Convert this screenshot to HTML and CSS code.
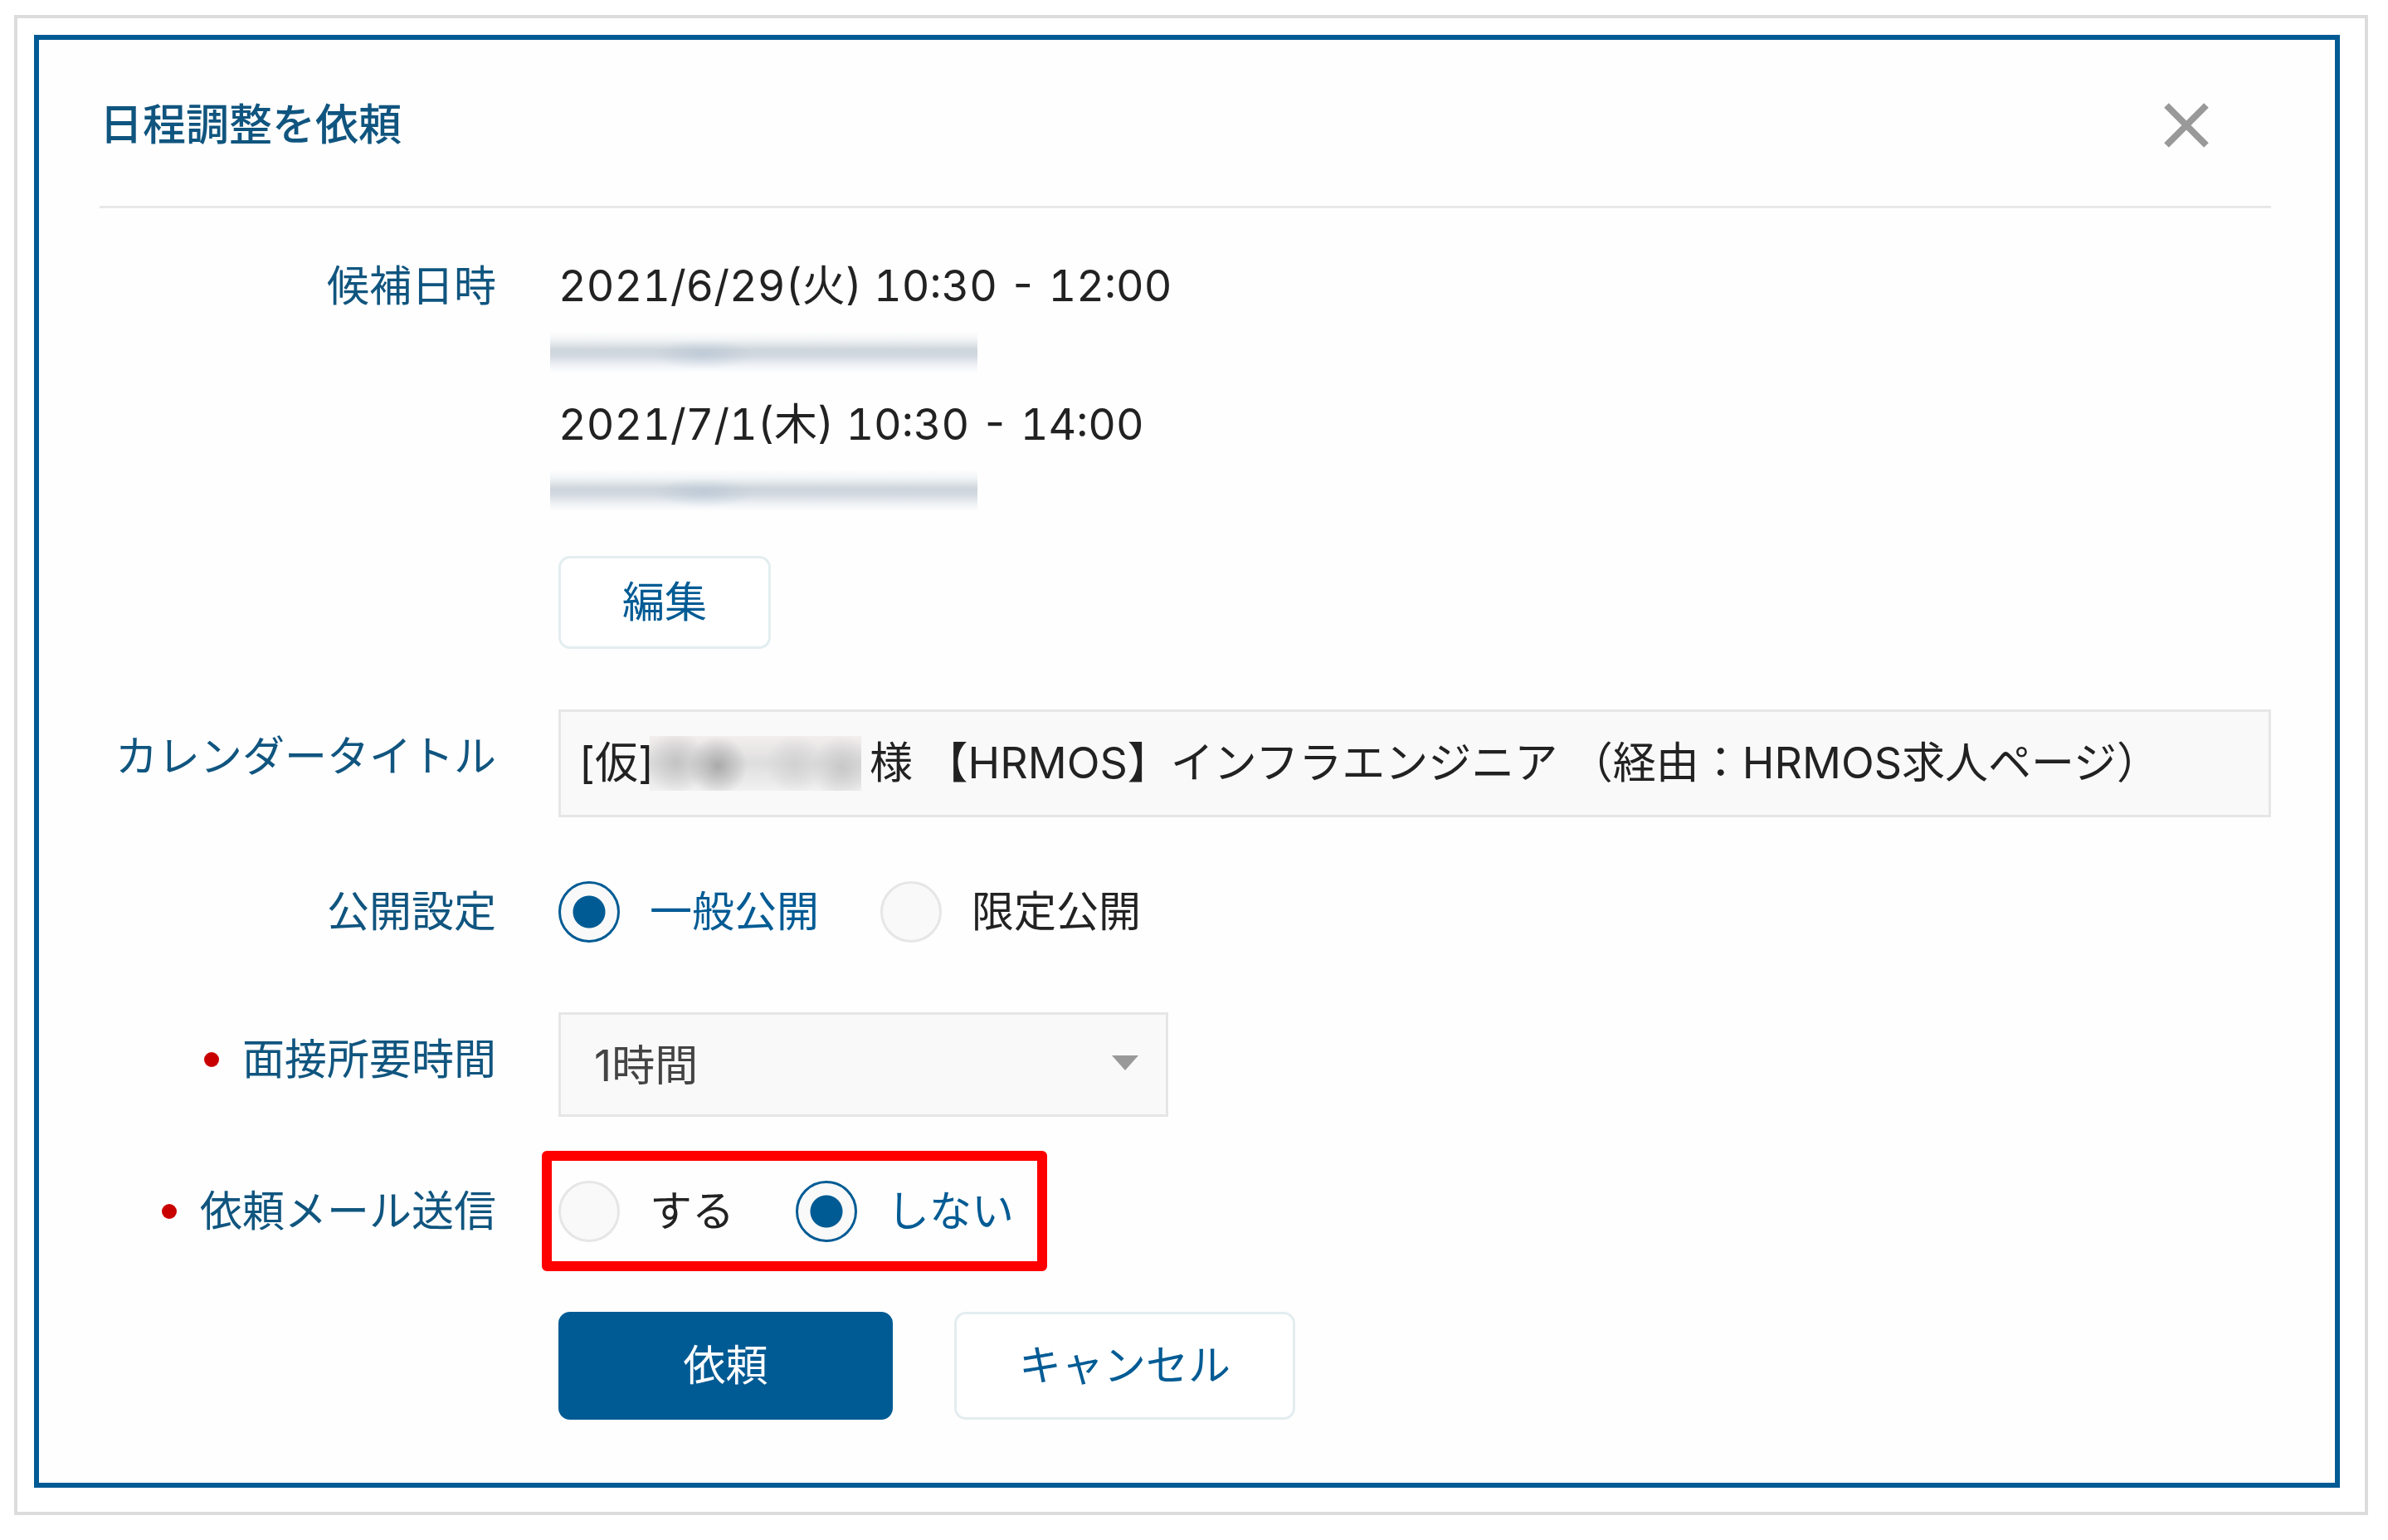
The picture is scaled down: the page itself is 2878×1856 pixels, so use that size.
FILE: index.html
```
<!DOCTYPE html>
<html lang="ja">
<head>
    <meta charset="UTF-8">
    <meta name="viewport" content="width=device-width, initial-scale=1.0">
    <title>日程調整を依頼</title>
    <link rel="stylesheet" href="styles.css">
</head>
<body>
    <div class="frame">
        <div class="dialog">
            <header class="dialog-header">
                <h1>日程調整を依頼</h1>
                <button type="button" class="close" aria-label="閉じる">
                    <svg viewBox="0 0 54 54" width="54" height="54">
                        <path d="M3 3L51 51M51 3L3 51" stroke="#999" stroke-width="8" fill="none"/>
                    </svg>
                </button>
            </header>

            <form class="form">
                <div class="row">
                    <span class="label">候補日時</span>
                    <div class="field">
                        <p class="date">2021/6/29(火) 10:30 - 12:00</p>
                        <div class="masked"></div>
                        <p class="date">2021/7/1(木) 10:30 - 14:00</p>
                        <div class="masked"></div>
                        <button type="button" class="btn btn-small">編集</button>
                    </div>
                </div>

                <div class="row row-title">
                    <label class="label" for="calendarTitle">カレンダータイトル</label>
                    <div class="field">
                        <input type="text" id="calendarTitle" class="text-input" value="[仮]　　　　　様 【HRMOS】インフラエンジニア （経由：HRMOS求人ページ）">
                        <div class="masked-name"></div>
                    </div>
                </div>

                <div class="row row-radio" role="radiogroup" aria-labelledby="visibilityLabel">
                    <span class="label" id="visibilityLabel">公開設定</span>
                    <div class="field radios">
                        <label class="radio"><input type="radio" name="visibility" checked><span>一般公開</span></label>
                        <label class="radio"><input type="radio" name="visibility"><span>限定公開</span></label>
                    </div>
                </div>

                <div class="row row-select">
                    <label class="label required" for="duration">面接所要時間</label>
                    <div class="field select">
                        <select id="duration">
                            <option>1時間</option>
                        </select>
                    </div>
                </div>

                <div class="row row-radio" role="radiogroup" aria-labelledby="mailLabel">
                    <span class="label required" id="mailLabel">依頼メール送信</span>
                    <div class="field radios highlight">
                        <label class="radio"><input type="radio" name="mail"><span>する</span></label>
                        <label class="radio"><input type="radio" name="mail" checked><span>しない</span></label>
                    </div>
                </div>

                <div class="actions">
                    <button type="submit" class="btn btn-primary">依頼</button>
                    <button type="button" class="btn">キャンセル</button>
                </div>
            </form>
        </div>
    </div>
</body>
</html>
```
FILE: styles.css
```
* {
    box-sizing: border-box;
}
body {
    margin: 0;
    padding: 18px 24px 30px 17px;
    background: #fff;
    color: #222;
    font-family: Inter, "Noto Sans CJK JP", sans-serif;
    font-size: 51px;
    line-height: 78px;
}
h1, p {
    margin: 0;
}
button, input, select {
    font: inherit;
    color: inherit;
}
.frame {
    padding: 20px 30px 29px 20px;
    border: 4px solid #dcdcdc;
}
.dialog {
    padding: 0 77px 76px 73px;
    border: 6px solid #005b94;
    background: #fefefe;
}
.dialog-header {
    display: flex;
    align-items: center;
    justify-content: space-between;
    height: 203px;
    padding: 6px 59px 0 0;
    border-bottom: 3px solid #e8e8e8;
}
.dialog-header h1 {
    color: #10557f;
    font-size: 52px;
    font-weight: 500;
}
.close {
    display: flex;
    padding: 16px;
    border: none;
    background: none;
    cursor: pointer;
}
.form {
    display: flex;
    flex-direction: column;
    gap: 73px;
    padding-top: 55px;
}
.row {
    display: grid;
    grid-template-columns: 478px 1fr;
    column-gap: 75px;
}
.row-title .label,
.row-select .label {
    padding-top: 18px;
}
.row-radio {
    padding: 2px 0 9px;
}
.label {
    display: flex;
    align-items: center;
    justify-content: flex-end;
    align-self: start;
    color: #10557f;
    white-space: nowrap;
}
.required::before {
    content: "";
    width: 18px;
    height: 18px;
    margin-right: 28px;
    border-radius: 50%;
    background: #c90000;
}
.field {
    position: relative;
}
.date {
    font-size: 52px;
    font-variant-numeric: tabular-nums;
}
/* hidden booking details */
.masked {
    width: 515px;
    height: 50px;
    margin: 15px 0 24px -10px;
    background:
        radial-gradient(60px 18px at 185px 28px, rgba(150, 175, 200, 0.3), rgba(150, 175, 200, 0)),
        linear-gradient(to bottom, rgba(255, 255, 255, 0) 0%, #f1f4f6 20%, #ced5db 46%, #d3d9e0 60%, #eef1f5 82%, rgba(255, 255, 255, 0) 100%);
}
.masked-name {
    position: absolute;
    top: 32px;
    left: 110px;
    width: 255px;
    height: 66px;
    background:
        radial-gradient(circle at 82px 36px, #aaa 0, rgba(170, 170, 170, 0) 36px),
        radial-gradient(circle at 32px 32px, #c4c4c4 0, rgba(196, 196, 196, 0) 38px),
        radial-gradient(circle at 175px 34px, #d2d2d2 0, rgba(210, 210, 210, 0) 36px),
        radial-gradient(circle at 232px 38px, #c8c8c8 0, rgba(200, 200, 200, 0) 38px),
        linear-gradient(to bottom, #f3eeee, #dedede 50%, #f1f1f1);
}
.btn {
    min-width: 411px;
    height: 130px;
    border: 3px solid #e3edf0;
    border-radius: 14px;
    background: #fff;
    color: #005b94;
    cursor: pointer;
}
.btn-small {
    display: block;
    min-width: 256px;
    height: 112px;
    margin-top: 54px;
}
.btn-primary {
    min-width: 403px;
    border-color: #005b94;
    background: #005b94;
    color: #fff;
}
.text-input,
.select select {
    display: block;
    border: 3px solid #e6e6e6;
    border-radius: 0;
    background: #f9f9f9;
    font-size: 52px;
}
.text-input {
    width: 100%;
    height: 130px;
    padding: 0 22px 10px;
}
.select {
    width: 735px;
}
.select select {
    width: 100%;
    height: 126px;
    padding: 4px 40px 0;
    color: #444;
    appearance: none;
}
.select::after {
    content: "";
    position: absolute;
    top: 52px;
    right: 36px;
    border: 16px solid transparent;
    border-top: 18px solid #999;
    border-bottom: none;
    pointer-events: none;
}
.radios {
    display: flex;
    gap: 74px;
    justify-self: start;
}
.radio {
    display: flex;
    align-items: center;
    gap: 36px;
    cursor: pointer;
}
.radio input {
    width: 74px;
    height: 74px;
    margin: 0;
    border: 3px solid #e6e6e6;
    border-radius: 50%;
    background: #f9f9f9;
    appearance: none;
}
.radio input:checked {
    border-color: #005b94;
    background: radial-gradient(circle, #005b94 19px, #f9f9f9 20px);
}
.radio input:checked + span {
    color: #005b94;
}
.highlight::before {
    content: "";
    position: absolute;
    inset: -34px -40px -33px -20px;
    border: 12px solid #f00;
    border-radius: 6px;
    pointer-events: none;
}
.actions {
    display: flex;
    gap: 74px;
    padding-left: 553px;
}
```
